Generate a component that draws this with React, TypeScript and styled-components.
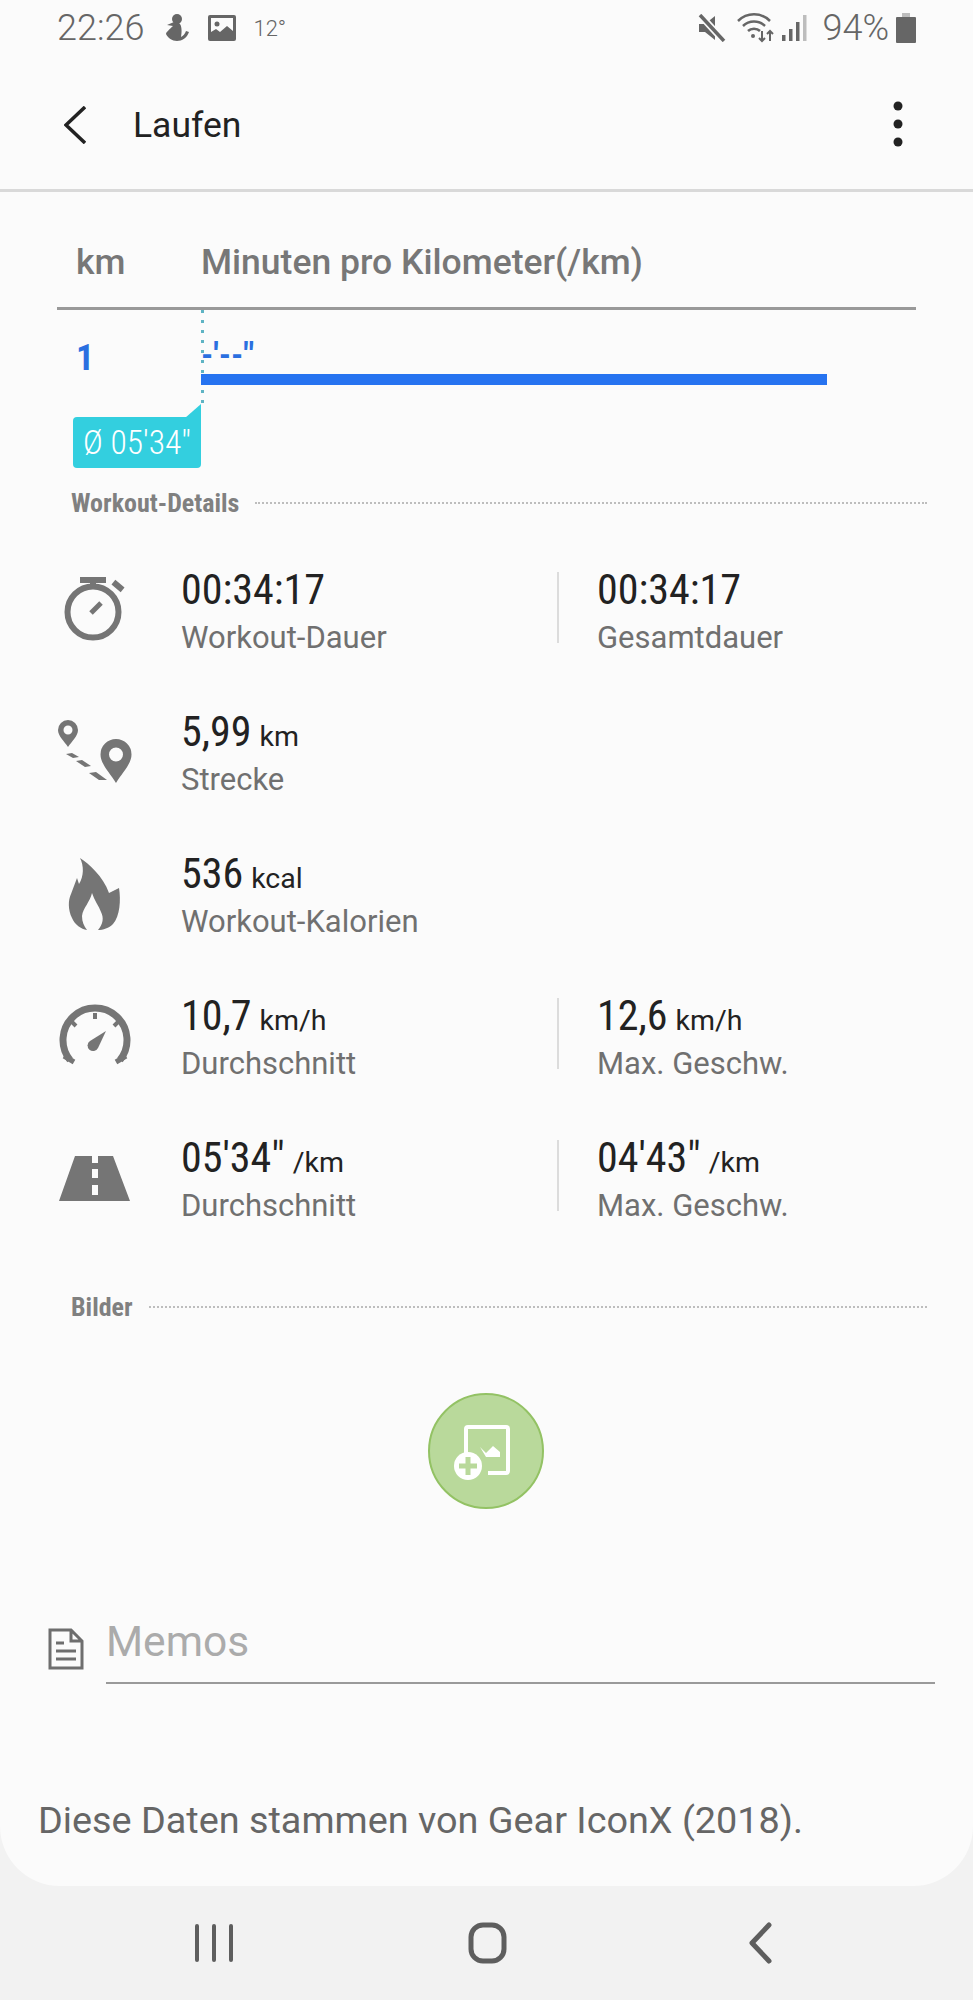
import React from 'react';
import styled, { createGlobalStyle } from 'styled-components';

const GlobalStyle = createGlobalStyle`
  html, body {
    margin: 0;
    padding: 0;
    background: #f2f2f2;
  }
  * {
    box-sizing: border-box;
  }
`;

const condensed = `"Roboto Condensed", "Liberation Sans Narrow", Roboto, sans-serif`;

const Page = styled.div`
  width: 973px;
  height: 2000px;
  display: flex;
  flex-direction: column;
  background: #f2f2f2;
  font-family: Roboto, sans-serif;
  overflow: hidden;
`;

const Sheet = styled.main`
  height: 1886px;
  display: flex;
  flex-direction: column;
  background: #fbfbfb;
  border-radius: 0 0 60px 60px;
`;

const StatusBar = styled.div`
  height: 56px;
  display: flex;
  align-items: center;
  justify-content: space-between;
  padding: 0 57px;
  color: #666;
`;

const StatusGroup = styled.div`
  display: flex;
  align-items: center;
`;

const Clock = styled.span`
  font-size: 36px;
  font-weight: 300;
  margin-right: 20px;
`;

const Temperature = styled.span`
  font-size: 22px;
  font-weight: 300;
  margin-left: 17px;
`;

const Battery = styled.span`
  font-size: 36px;
  font-weight: 300;
  margin: 0 7px 0 14px;
`;

const Toolbar = styled.header`
  height: 136px;
  display: flex;
  align-items: center;
  padding: 0 64px;
  border-bottom: 3px solid #d9d9d9;
`;

const Title = styled.h1`
  flex: 1;
  margin: 5px 0 0 47px;
  font-size: 35.5px;
  font-weight: 400;
  color: #222;
`;

const SplitHeader = styled.div`
  height: 118px;
  margin: 0 57px;
  padding-top: 24px;
  display: flex;
  align-items: center;
  border-bottom: 3px solid #999;
  font-size: 35.5px;
  font-weight: 500;
  color: #777;
`;

const KmCell = styled.span`
  width: 144px;
  padding-left: 19px;
`;

const LapRow = styled.div`
  height: 94px;
  margin-left: 76px;
  display: flex;
`;

const LapIndex = styled.span`
  width: 125px;
  padding-top: 27px;
  font-size: 36px;
  font-weight: 700;
  font-family: ${condensed};
  color: #2a6fe0;
`;

const LapTrack = styled.div`
  flex: 1;
  background: repeating-linear-gradient(#5fb4c4 0 3px, transparent 3px 10px) left top / 3px 100% no-repeat;
`;

const LapTime = styled.div`
  height: 64px;
  padding-top: 26px;
  font-size: 34px;
  font-weight: 700;
  line-height: 36px;
  font-family: ${condensed};
  color: #2a6fe0;
`;

const LapBar = styled.div<{ $width: number }>`
  width: ${p => p.$width}px;
  height: 11px;
  background: #2673f0;
`;

const AverageBadge = styled.div`
  position: relative;
  width: 128px;
  height: 51px;
  margin: 13px 0 0 73px;
  display: flex;
  align-items: center;
  justify-content: center;
  background: #33cfdf;
  border-radius: 4px 0 4px 4px;
  color: #fff;
  font-family: ${condensed};
  font-size: 33.5px;
  font-weight: 300;

  &::before {
    content: '';
    position: absolute;
    right: 0;
    top: -13px;
    border-style: solid;
    border-width: 0 0 14px 16px;
    border-color: transparent transparent #33cfdf transparent;
  }
`;

const SectionHeading = styled.div<{ $top: number }>`
  height: 30px;
  margin: ${p => p.$top}px 46px 0 71px;
  display: flex;
  align-items: center;
  gap: 16px;
  font-family: ${condensed};
  font-size: 26px;
  font-weight: 700;
  color: #808080;

  &::after {
    content: '';
    flex: 1;
    border-top: 2px dotted #bdbdbd;
  }
`;

const MetricList = styled.section`
  margin-top: 23px;
`;

const Row = styled.div`
  height: 142px;
  padding-left: 53px;
  display: flex;
  align-items: center;
`;

const RowIcon = styled.svg`
  width: 80px;
  height: 80px;
  margin-right: 48px;
  fill: #757575;
`;

const Metric = styled.div<{ $second?: boolean }>`
  width: ${p => (p.$second ? 'auto' : '376px')};
  padding-left: ${p => (p.$second ? '38px' : '0')};
`;

const Value = styled.div`
  height: 48px;
  line-height: 48px;
  font-family: ${condensed};
  font-size: 42px;
  font-weight: 400;
  color: #222;
  white-space: nowrap;
`;

const Unit = styled.span`
  font-family: Roboto, sans-serif;
  font-size: 28.5px;
  font-weight: 400;
  margin-left: 8px;
`;

const Label = styled.div`
  height: 40px;
  margin-top: 4px;
  line-height: 40px;
  font-size: 31px;
  color: #707070;
`;

const RowDivider = styled.div`
  width: 2px;
  height: 71px;
  align-self: flex-start;
  margin-top: 31px;
  background: #dcdcdc;
`;

const AddImageButton = styled.button`
  width: 116px;
  height: 116px;
  margin: 71px 0 0 428px;
  padding: 0;
  border: 2px solid #93c264;
  border-radius: 50%;
  background: #b9d99b;
  display: flex;
  align-items: center;
  justify-content: center;
`;

const MemoRow = styled.div`
  height: 74px;
  margin: 101px 38px 0 48px;
  display: flex;
  align-items: flex-end;
  gap: 22px;
`;

const MemoIcon = styled.svg`
  width: 36px;
  height: 42px;
  margin-bottom: 14px;
  flex: none;
`;

const MemoField = styled.div`
  flex: 1;
  height: 74px;
  border-bottom: 2px solid #9a9a9a;
  font-size: 42.5px;
  font-weight: 400;
  line-height: 64px;
  color: #ababab;
`;

const SourceNote = styled.p`
  height: 50px;
  margin: 111px 0 0 38px;
  font-size: 37.8px;
  line-height: 50px;
  color: #666;
  white-space: nowrap;
`;

const NavBar = styled.nav`
  height: 114px;
  display: grid;
  grid-template-columns: repeat(3, 1fr);
  padding: 0 78px;
  align-items: center;
  justify-items: center;
`;

const NavIcon = styled.svg`
  width: 48px;
  height: 48px;
  fill: none;
  stroke: #5e5e5e;
  stroke-width: 4;
  stroke-linecap: round;
  stroke-linejoin: round;
`;

const Stopwatch = () => (
  <RowIcon viewBox="0 0 80 80">
    <circle cx="40" cy="40" r="25.5" fill="none" stroke="#757575" strokeWidth="6" />
    <rect x="27" y="5" width="26" height="6" />
    <rect x="37" y="10" width="6" height="6" />
    <rect x="59" y="11" width="12" height="6" transform="rotate(40 65 14)" />
    <path d="M38 41 L48 31" stroke="#757575" strokeWidth="5" />
  </RowIcon>
);

const RouteIcon = () => (
  <RowIcon viewBox="0 0 80 80">
    <path
      fillRule="evenodd"
      d="M15 6a10 10 0 0 1 10 10c0 6-6 11-10 17-4-6-10-11-10-17A10 10 0 0 1 15 6zm0 5.500a4.500 4.500 0 1 0 0 9 4.500 4.500 0 0 0 0-9z"
    />
    <path
      fillRule="evenodd"
      d="M63 25a15.500 15.500 0 0 1 15.500 15.500C78.500 50 69 59 63 69c-6-10-15.500-19-15.500-28.500A15.500 15.500 0 0 1 63 25zm0 8.500a7 7 0 1 0 0 14 7 7 0 0 0 0-14z"
    />
    <path d="M13 40l6-1 7 4-6 1zM23 47l6-1 9 6-6 1zM36 59l7-1 11 8-8 0z" />
  </RowIcon>
);

const FlameIcon = () => (
  <RowIcon viewBox="0 0 80 80">
    <path d="M27 2C36 8 50 20 56 37L66 32C68 44 67 60 60 68C56 72 50 74 45 74C50 68 51 62 48 56C46 50 41 44 39 37C37 46 30 52 29 60C29 66 31 70 34 74C28 73 22 69 19 62C15 54 15 44 18 38L24 22L26 28C31 20 31 10 27 2Z" />
  </RowIcon>
);

const GaugeIcon = () => (
  <RowIcon viewBox="0 0 80 80">
    <path d="M17 62A32 32 0 1 1 67 62" fill="none" stroke="#757575" strokeWidth="7" />
    <path d="M11 58l10 6M73 58l-10 6" stroke="#757575" strokeWidth="5" />
    <path d="M42 15v6M19 24l4 4M65 24l-4 4" stroke="#757575" strokeWidth="4" />
    <path d="M53 33L45 50a5.500 5.500 0 1 1-8-7z" />
  </RowIcon>
);

const RoadIcon = () => (
  <RowIcon viewBox="0 0 80 80">
    <path d="M22 16h17v7h6v-7h15l17 45H6zM39 29v9h6v-9zM39 45v10h6V45z" fillRule="evenodd" />
  </RowIcon>
);

const App: React.FC = () => {
  return (
    <Page>
      <GlobalStyle />
      <Sheet>
        <StatusBar>
          <StatusGroup>
            <Clock>22:26</Clock>
            <svg width="26" height="28" viewBox="0 0 26 28" fill="#666">
              <circle cx="13" cy="5" r="5" />
              <path d="M10 8L3 11L9 12C6 15 2 18 2 20C4 24 8 27 13 27C18 27 23 24 25 18L22 17C21 20 19 22 17 23C18 18 18 11 15 9Z" />
            </svg>
            <svg width="28" height="26" viewBox="0 0 28 26" style={{ marginLeft: 18 }}>
              <rect width="28" height="26" rx="2" fill="#666" />
              <rect x="3" y="3" width="22" height="20" fill="#fbfbfb" />
              <circle cx="9" cy="9" r="2.500" fill="#666" />
              <path d="M3 23v-6l5-3 4 3 7-6 6 5v7z" fill="#666" />
            </svg>
            <Temperature>12°</Temperature>
          </StatusGroup>
          <StatusGroup>
            <svg width="28" height="28" viewBox="0 0 28 28">
              <path d="M1 10h6l10-8v24l-10-8H1z" fill="#666" />
              <path d="M3 2l22 24" stroke="#fbfbfb" strokeWidth="7" />
              <path d="M2 1l24 26" stroke="#666" strokeWidth="3.500" />
            </svg>
            <svg width="38" height="30" viewBox="0 0 38 30" style={{ marginLeft: 11 }} fill="none" stroke="#666" strokeWidth="2.500">
              <path d="M1 8c9-9 23-9 32 0M6 13c6-6 16-6 22 0M11 18c3-3 9-3 12 0" />
              <circle cx="16" cy="23" r="2" fill="#666" stroke="none" />
              <path d="M25 18v10M22 25l3 3 3-3M33 28V18M30 21l3-3 3 3" strokeWidth="2" />
            </svg>
            <svg width="26" height="28" viewBox="0 0 26 28" style={{ marginLeft: 7 }}>
              <rect x="0" y="21" width="3.500" height="6" fill="#666" />
              <rect x="7" y="15" width="3.500" height="12" fill="#666" />
              <rect x="14" y="8" width="3.500" height="19" fill="#666" />
              <rect x="21" y="1" width="3.500" height="26" fill="#bdbdbd" />
            </svg>
            <Battery>94%</Battery>
            <svg width="20" height="30" viewBox="0 0 20 30">
              <rect x="6" y="0" width="8" height="5" fill="#bdbdbd" />
              <rect x="0" y="4" width="20" height="26" rx="1" fill="#666" />
            </svg>
          </StatusGroup>
        </StatusBar>

        <Toolbar>
          <svg width="22" height="38" viewBox="0 0 22 38" fill="none" stroke="#222" strokeWidth="3.500" style={{ marginTop: 5 }}>
            <path d="M21 1L2 19l19 18" />
          </svg>
          <Title>Laufen</Title>
          <svg width="10" height="46" viewBox="0 0 10 46" style={{ marginRight: 6, marginTop: 3 }} fill="#222">
            <circle cx="5" cy="5" r="4.500" />
            <circle cx="5" cy="23" r="4.500" />
            <circle cx="5" cy="41" r="4.500" />
          </svg>
        </Toolbar>

        <SplitHeader>
          <KmCell>km</KmCell>
          <span>Minuten pro Kilometer(/km)</span>
        </SplitHeader>

        <LapRow>
          <LapIndex>1</LapIndex>
          <LapTrack>
            <LapTime>-'--"</LapTime>
            <LapBar $width={626} />
          </LapTrack>
        </LapRow>
        <AverageBadge>Ø 05'34"</AverageBadge>

        <SectionHeading $top={20}>Workout-Details</SectionHeading>

        <MetricList>
          <Row>
            <Stopwatch />
            <Metric>
              <Value>00:34:17</Value>
              <Label>Workout-Dauer</Label>
            </Metric>
            <RowDivider />
            <Metric $second>
              <Value>00:34:17</Value>
              <Label>Gesamtdauer</Label>
            </Metric>
          </Row>
          <Row>
            <RouteIcon />
            <Metric>
              <Value>5,99<Unit>km</Unit></Value>
              <Label>Strecke</Label>
            </Metric>
          </Row>
          <Row>
            <FlameIcon />
            <Metric>
              <Value>536<Unit>kcal</Unit></Value>
              <Label>Workout-Kalorien</Label>
            </Metric>
          </Row>
          <Row>
            <GaugeIcon />
            <Metric>
              <Value>10,7<Unit>km/h</Unit></Value>
              <Label>Durchschnitt</Label>
            </Metric>
            <RowDivider />
            <Metric $second>
              <Value>12,6<Unit>km/h</Unit></Value>
              <Label>Max. Geschw.</Label>
            </Metric>
          </Row>
          <Row>
            <RoadIcon />
            <Metric>
              <Value>05'34"<Unit>/km</Unit></Value>
              <Label>Durchschnitt</Label>
            </Metric>
            <RowDivider />
            <Metric $second>
              <Value>04'43"<Unit>/km</Unit></Value>
              <Label>Max. Geschw.</Label>
            </Metric>
          </Row>
        </MetricList>

        <SectionHeading $top={41}>Bilder</SectionHeading>

        <AddImageButton aria-label="Bild hinzufügen">
          <svg width="112" height="112" viewBox="0 0 112 112">
            <path d="M36 58V34q0-2 2-2h38q2 0 2 2v42q0 2-2 2H58" fill="none" stroke="#fff" strokeWidth="4" />
            <path d="M50 52l6 6 7-7 7 6v5H56z" fill="#fff" />
            <circle cx="38" cy="71" r="14" fill="#fff" />
            <path d="M38 62v18M29 71h18" stroke="#b9d99b" strokeWidth="5" />
          </svg>
        </AddImageButton>

        <MemoRow>
          <MemoIcon viewBox="0 0 36 42" fill="none" stroke="#6e6e6e" strokeWidth="3">
            <path d="M2 2h21l11 11v27H2zM23 2v11h11" />
            <path d="M8 15h8M8 23h20M8 31h20" />
          </MemoIcon>
          <MemoField>Memos</MemoField>
        </MemoRow>

        <SourceNote>Diese Daten stammen von Gear IconX (2018).</SourceNote>
      </Sheet>

      <NavBar>
        <NavIcon viewBox="0 0 48 48" strokeWidth="3.5">
          <path d="M7 7v34M24 7v34M41 7v34" />
        </NavIcon>
        <NavIcon viewBox="0 0 48 48">
          <rect x="9" y="6" width="33" height="36" rx="12" strokeWidth="5" />
        </NavIcon>
        <NavIcon viewBox="0 0 48 48">
          <path d="M34 6L17 24l17 18" strokeWidth="5" />
        </NavIcon>
      </NavBar>
    </Page>
  );
};

export default App;
